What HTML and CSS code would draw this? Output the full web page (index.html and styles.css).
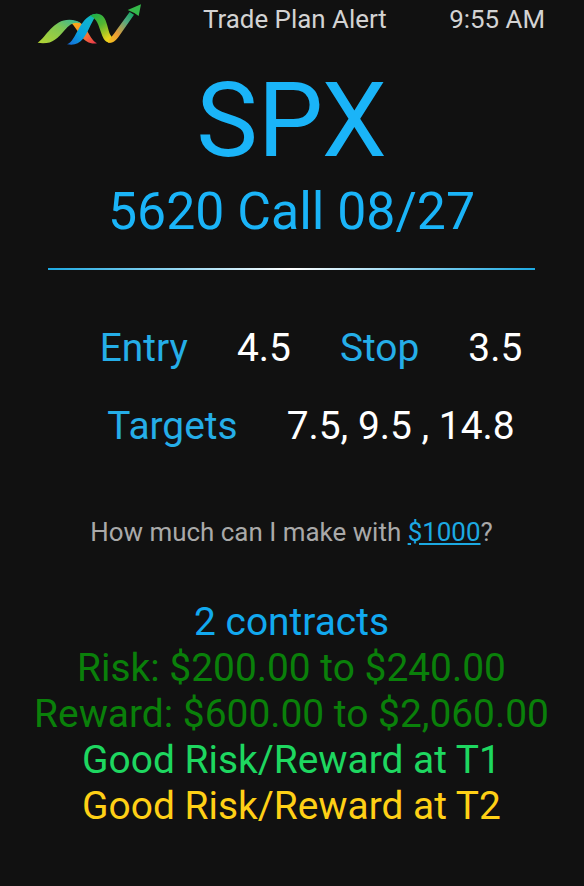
FILE: index.html
```
<!DOCTYPE html>
<html lang="en">
<head>
  <meta charset="UTF-8" />
  <meta name="viewport" content="width=device-width,initial-scale=1.0" />
  <title>Trade Plan Alert</title>
  <link rel="stylesheet" href="styles.css">
</head>
<body>
  <header class="topbar">
    <svg class="logo" viewBox="50 10 315 126" aria-hidden="true">
      <defs>
        <linearGradient id="lime" x1="0" y1="1" x2="1" y2="0">
          <stop offset="0" stop-color="#b5d432" />
          <stop offset="0.6" stop-color="#7cc654" />
          <stop offset="1" stop-color="#2fb5a0" />
        </linearGradient>
        <linearGradient id="orange" x1="0" y1="0" x2="1" y2="1">
          <stop offset="0" stop-color="#fbb615" />
          <stop offset="0.5" stop-color="#f98a2c" />
          <stop offset="1" stop-color="#e9304f" />
        </linearGradient>
        <linearGradient id="blue" x1="0" y1="1" x2="1" y2="0">
          <stop offset="0" stop-color="#1668d8" />
          <stop offset="0.4" stop-color="#08a5e0" />
          <stop offset="0.75" stop-color="#0fb3d0" />
          <stop offset="1" stop-color="#16b58e" />
        </linearGradient>
        <linearGradient id="green" x1="0" y1="0" x2="0.5" y2="1">
          <stop offset="0" stop-color="#14ac4c" />
          <stop offset="0.5" stop-color="#55b531" />
          <stop offset="1" stop-color="#e9d31c" />
        </linearGradient>
        <linearGradient id="tail" x1="0" y1="1" x2="0.8" y2="0">
          <stop offset="0" stop-color="#f8c51c" />
          <stop offset="0.35" stop-color="#e99a35" />
          <stop offset="0.75" stop-color="#55a880" />
          <stop offset="1" stop-color="#1ea667" />
        </linearGradient>
      </defs>
      <path fill="url(#orange)" d="M150 64C168 57 184 65 195 82C208 103 216 121 230 128C210 131 194 123 182 106C170 90 163 76 150 64Z" />
      <path fill="url(#lime)" d="M52 126C78 108 98 57 147 57C162 57 174 61 181 68C160 61 147 73 134 87C110 114 99 127 68 128Z" />
      <path fill="url(#blue)" d="M140 131C170 121 178 40 231 39C225 46 219 57 211 73C195 108 182 132 153 132Z" />
      <path fill="url(#green)" d="M208 46C224 36 242 36 252 52C263 70 263 96 274 108L280 121C268 129 256 125 250 114C239 93 235 65 223 55C219 50 214 47 208 46Z" />
      <path fill="url(#tail)" d="M263 126C264 118 270 112 276 105C283 97 288 89 293 82L328 34L341 42L297 105C285 123 275 128 263 126Z" />
      <path fill="#35b94a" d="M322 28L362 11L355 46L342 37Z" />
    </svg>
    <span class="title">Trade Plan Alert</span>
    <time class="time">9:55 AM</time>
  </header>
  <main>
    <h1>SPX</h1>
    <h2>5620 Call 08/27</h2>
    <div class="divider"></div>
    <section class="levels">
      <div class="row">
        <span class="label">Entry</span>
        <span>4.5</span>
        <span class="label">Stop</span>
        <span>3.5</span>
      </div>
      <div class="row">
        <span class="label">Targets</span>
        <span>7.5, 9.5 , 14.8</span>
      </div>
    </section>
    <p class="question">How much can I make with <a href="#">$1000</a>?</p>
    <section class="results">
      <div class="contracts">2 contracts</div>
      <div class="amount">Risk: $200.00 to $240.00</div>
      <div class="amount">Reward: $600.00 to $2,060.00</div>
      <div class="t1">Good Risk/Reward at T1</div>
      <div class="t2">Good Risk/Reward at T2</div>
    </section>
  </main>
</body>
</html>
```
FILE: styles.css
```
body {
  background: #111;
  color: #fff;
  font-family: Roboto, Arial, sans-serif;
  margin: 0;
  min-height: 100vh;
  overflow: hidden;
}
.topbar {
  display: flex;
  align-items: flex-start;
  height: 64px;
  padding: 4px 39px 0 37px;
  color: #d3d3d3;
  font-size: 25.9px;
  line-height: 30px;
  white-space: nowrap;
}
.logo {
  width: 105px;
  height: 42px;
  flex: none;
}
.title {
  margin-left: 61px;
}
.time {
  margin-left: auto;
}
main {
  padding-right: 1px;
  text-align: center;
}
h1, h2 {
  margin: 0;
  color: #1ab4f8;
  font-weight: 400;
}
h1 {
  font-size: 103.7px;
  line-height: 105px;
}
h2 {
  font-size: 51.8px;
  line-height: 60px;
  margin-top: 9px;
}
.divider {
  height: 2px;
  margin: 26px 48px 0;
  background: linear-gradient(to right, #1ca9e2, #fff, #1ca9e2);
}
.levels {
  display: grid;
  gap: 32px;
  margin-top: 55px;
  padding-left: 39px;
  font-size: 38.9px;
  line-height: 46px;
}
.row {
  display: flex;
  justify-content: center;
  gap: 49px;
  white-space: nowrap;
}
.label {
  color: #25aee8;
}
.question {
  margin: 68px 0 0;
  color: #a9a9a9;
  font-size: 25.95px;
  line-height: 30px;
}
.question a {
  color: #1ca9e2;
}
.results {
  margin-top: 52px;
  font-size: 38.9px;
  line-height: 46px;
  white-space: nowrap;
}
.contracts {
  color: #12a9ef;
}
.amount {
  color: #0a800a;
}
.t1 {
  color: #1ed760;
}
.t2 {
  color: #ffd016;
}
```
